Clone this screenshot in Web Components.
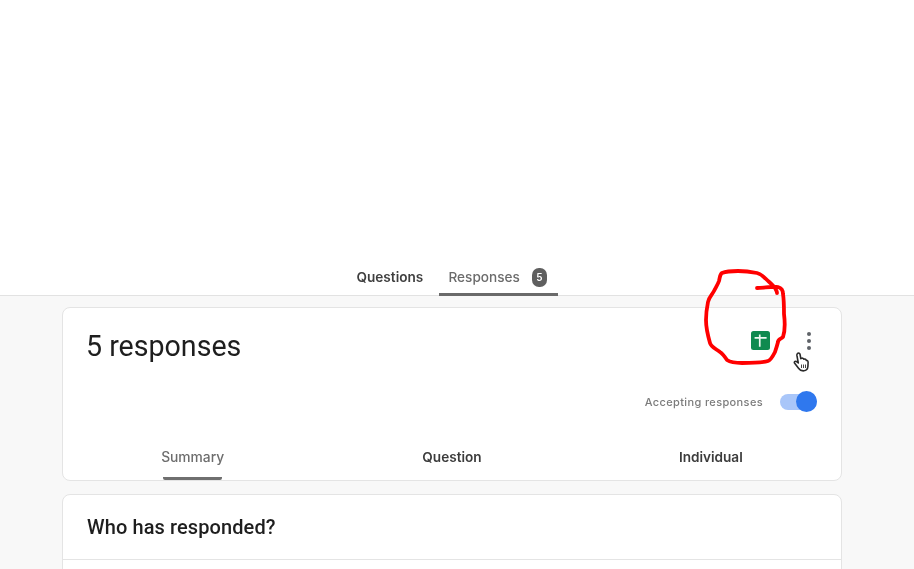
<!DOCTYPE html>
<html><head><meta charset="utf-8">
<style>
html,body{margin:0;padding:0;height:569px;overflow:hidden;background:#fff;font-family:Inter,Roboto,sans-serif}
</style></head><body>
<template id="t-nav"><style>
:host{display:flex;justify-content:center;align-items:flex-end;height:296px;box-sizing:border-box;border-bottom:1px solid #e2e2e2;background:#fff;filter:blur(.45px)}
.tab{display:flex;align-items:center;height:40px;box-sizing:border-box;padding:3px 0 0;font:600 13.6px Inter,sans-serif;position:relative}
.q{color:#3f3f3f;width:82px}
.r{color:#6b6b6b;width:119px;justify-content:flex-start;padding-left:10px;gap:12px;border-bottom:3px solid #6a6a6a;margin-bottom:-1px;padding-top:5px;font-weight:500}
.b{background:#5f5f5f;color:#fff;font-size:10px;font-weight:600;width:15px;height:19px;border-radius:7px;display:flex;align-items:center;justify-content:center}
</style><div class="tab q">Questions</div><div class="tab r"><span>Responses</span><span class="b">5</span></div></template>

<template id="t-card"><style>
:host{display:block;background:#fff;border:1px solid #e4e4e4;border-radius:8px;box-sizing:border-box}
</style><slot></slot></template>

<template id="t-summary"><style>
:host{display:flex;flex-direction:column;height:172px;box-sizing:border-box;filter:blur(.4px)}
.top{display:flex;justify-content:space-between;align-items:flex-start;padding:20px 24px 0 23px;height:68px;box-sizing:border-box}
h1{margin:0;font:400 28.6px/36px Roboto,sans-serif;color:#1e1e1e}
.acts{display:flex;align-items:center;gap:37px;padding-top:3px;margin-right:6px}
.sheet{width:19px;height:19px}
.dots{width:4px;display:flex;flex-direction:column;gap:3px}
.dots i{display:block;width:4px;height:4px;border-radius:50%;background:#5f6368}
.acc{display:flex;justify-content:flex-end;align-items:center;gap:17px;padding:0 24px;height:26px;margin-top:13px;font:500 11px Inter,sans-serif;letter-spacing:.36px;color:#7b7b7b}
.sw{position:relative;width:37px;height:16px;border-radius:8px;background:#a9c6f9}
.sw::after{content:"";position:absolute;right:0;top:-3px;width:21px;height:21px;border-radius:50%;background:#2f78ee}
.tabs{display:grid;grid-template-columns:repeat(3,1fr);margin-top:auto;height:49px;font:600 13.6px Inter,sans-serif;color:#3c3c3c}
.tabs div{display:flex;align-items:center;justify-content:center;padding-top:3px;box-sizing:border-box}
.tabs .s{color:#6d6d6d;width:59px;justify-self:center;border-bottom:3px solid #6f6f6f;border-radius:0 0 2px 2px;white-space:nowrap;padding-top:6px;font-weight:500;font-size:13.8px}
.tabs div:nth-child(3){margin-left:-1px}
</style>
<div class="top"><h1>5 responses</h1><div class="acts">
<svg class="sheet" viewBox="0 0 19 19"><rect width="19" height="19" rx="2.5" fill="#0f8a4f"/><path d="M3.6 6h12v1.7h-12zM7.9 3.4h1.7v12.4H7.9z" fill="#eef8f2"/></svg>
<div class="dots"><i></i><i></i><i></i></div></div></div>
<div class="acc"><span>Accepting responses</span><div class="sw"></div></div>
<div class="tabs"><div class="s">Summary</div><div>Question</div><div>Individual</div></div>
</template>

<template id="t-who"><style>
:host{display:block;height:120px;filter:blur(.4px)}
.h{height:65px;box-sizing:border-box;border-bottom:1px solid #e4e4e4;padding:0 24px;display:flex;align-items:center;font:500 20px Roboto,sans-serif;color:#1e1e1e;letter-spacing:.1px}
</style><div class="h">Who has responded?</div></template>

<template id="t-main"><style>
:host{display:flex;flex-direction:column;gap:13px;background:#f8f8f8;padding:11px 72px 0 62px;height:273px;box-sizing:border-box;overflow:hidden}
</style><slot></slot></template>

<template id="t-ink"><style>
:host{position:absolute;left:0;top:0;width:914px;height:569px;pointer-events:none;display:block}
svg{position:absolute;left:0;top:0}
</style>
<svg width="914" height="569" viewBox="0 0 914 569">
<path d="M757 288C764 288 772 286 778 287C782 288 783 291 783 294C784 300 784 308 784 314C785 322 785 331 783 337C781 339 778 339 778 342C777 346 776 349 775 352C773 356 771 360 768 361C762 363 752 363 742 363C736 363 730 362 727 360C725 357 723 354 720 352C716 349 711 347 710 343C708 336 706 328 706 320C706 313 707 307 708 302C709 297 712 295 714 291C716 287 718 284 719 281C720 277 720 274 722 273C727 271 733 271 738 271C745 271 752 272 757 273C761 274 764 277 766 279C769 282 773 285 775 288C776 290 777 291 777 293" fill="none" stroke="#f00" stroke-width="3.8" stroke-linecap="round" stroke-linejoin="round"/>
<g transform="translate(793.5 352)">
<path d="M4 1.5C5.2.6 6.4 1.2 6.6 2.6L7.3 6.6C8.6 5.8 10 6.2 10.4 7.2C11.6 6.8 12.6 7.4 12.8 8.4C13.8 8.2 14.6 9 14.6 10.2L14.4 14.5C14.2 17 12.8 18.6 10.4 18.8C8 19 6.2 18 5 16.2L1 11C.4 10 1.4 8.8 2.8 9.4L4.8 11L3.4 3.4C3.3 2.6 3.5 1.9 4 1.5Z" fill="#fff" stroke="#2a2a2a" stroke-width="1.6" stroke-linejoin="round"/>
<path d="M8 12.5v3.5M10 12.5v3.5M12 12.5v3.5" stroke="#444" stroke-width="1"/>
</g></svg></template>

<script>
function def(name,tid){customElements.define(name,class extends HTMLElement{constructor(){super();this.attachShadow({mode:'open'}).appendChild(document.getElementById(tid).content.cloneNode(true))}})}
def('form-nav','t-nav');def('form-card','t-card');def('summary-panel','t-summary');def('who-panel','t-who');def('form-main','t-main');def('ink-layer','t-ink');
</script>
<form-nav></form-nav>
<form-main>
<form-card><summary-panel></summary-panel></form-card>
<form-card><who-panel></who-panel></form-card>
</form-main>
<ink-layer></ink-layer>
</body></html>
